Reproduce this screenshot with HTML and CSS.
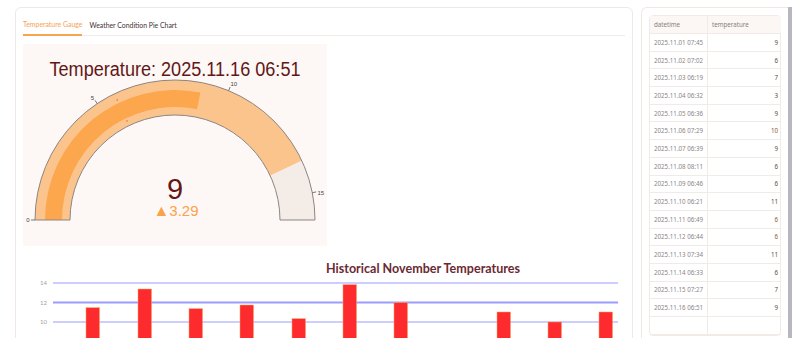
FILE: index.html
```html
<!DOCTYPE html>
<html>
<head>
<meta charset="utf-8">
<link rel="stylesheet" href="styles.css">
</head>
<body>
<div class="page">
  <section class="card main">
    <nav class="tabs">
      <span class="tab active">Temperature Gauge</span>
      <span class="tab">Weather Condition Pie Chart</span>
    </nav>
    <div class="gauge">
      <svg width="304" height="202" viewBox="0 0 304 202">
        <text class="g-title" x="152" y="32" text-anchor="middle" textLength="251" lengthAdjust="spacingAndGlyphs">Temperature: 2025.11.16 06:51</text>
        <path d="M12,176 A140,140 0 0 1 278.88,116.83 L247.16,131.63 A105,105 0 0 0 47,176 Z" fill="#fcc48d"/>
        <path d="M278.88,116.83 A140,140 0 0 1 292,176 L257,176 A105,105 0 0 0 247.16,131.63 Z" fill="#f3ece7"/>
        <path d="M22,176 A130,130 0 0 1 177.36,48.5 L174.05,65.17 A113,113 0 0 0 39,176 Z" fill="#fca64d"/>
        <circle cx="94.2" cy="56" r="0.7" fill="#e8502a"/>
        <circle cx="104" cy="77" r="0.7" fill="#e8502a"/>
        <path d="M12,176 A140,140 0 0 1 292,176 L257,176 A105,105 0 0 0 47,176 Z" fill="none" stroke="#8c8583" stroke-width="1"/>
        <g stroke="#555" stroke-width="0.8">
          <line x1="12" y1="176" x2="8" y2="176"/>
          <line x1="74.2" y1="59.6" x2="72" y2="56.3"/>
          <line x1="205.6" y1="46.7" x2="207.1" y2="43"/>
          <line x1="289.3" y1="148.7" x2="293.2" y2="147.9"/>
        </g>
        <g class="tick">
          <text x="6.5" y="178" text-anchor="end">0</text>
          <text x="71" y="56" text-anchor="end">5</text>
          <text x="207.5" y="42">10</text>
          <text x="294.5" y="150.5">15</text>
        </g>
        <text class="g-value" x="152" y="155" text-anchor="middle">9</text>
        <text class="g-delta" x="153" y="172" text-anchor="middle"><tspan class="tri">▲</tspan>3.29</text>
      </svg>
    </div>
    <div class="chart">
      <svg width="602" height="100" viewBox="0 0 602 100">
        <text class="c-title" x="400" y="22.5" text-anchor="middle" textLength="194" lengthAdjust="spacingAndGlyphs">Historical November Temperatures</text>
        <g class="ylab">
          <text x="24" y="35">14</text>
          <text x="24" y="54.5">12</text>
          <text x="24" y="74">10</text>
        </g>
        <line x1="30" x2="595" y1="33" y2="33" stroke="#9c9cff" stroke-width="1.2"/>
        <line x1="30" x2="595" y1="52.5" y2="52.5" stroke="#9c9cff" stroke-width="2"/>
        <line x1="30" x2="595" y1="72" y2="72" stroke="#9c9cff" stroke-width="1.2"/>
        <g class="bars">
          <rect x="63" y="57.7" width="13.5" height="60"/>
          <rect x="115" y="39" width="13.5" height="80"/>
          <rect x="166" y="58.7" width="13.5" height="60"/>
          <rect x="217" y="55" width="13.5" height="60"/>
          <rect x="269" y="68.7" width="13.5" height="60"/>
          <rect x="320" y="34.7" width="13.5" height="80"/>
          <rect x="371" y="52.7" width="13.5" height="60"/>
          <rect x="474" y="62" width="13.5" height="60"/>
          <rect x="525" y="72" width="13.5" height="60"/>
          <rect x="576" y="62" width="13.5" height="60"/>
        </g>
      </svg>
    </div>
  </section>
  <aside class="side">
    <div class="card table-card">
      <div class="grid">
        <div class="th">datetime</div><div class="th">temperature</div>
        <div class="td">2025.11.01 07:45</div><div class="td num">9</div>
        <div class="td">2025.11.02 07:02</div><div class="td num">6</div>
        <div class="td">2025.11.03 06:19</div><div class="td num">7</div>
        <div class="td">2025.11.04 06:32</div><div class="td num">3</div>
        <div class="td">2025.11.05 06:36</div><div class="td num">9</div>
        <div class="td">2025.11.06 07:29</div><div class="td num hi">10</div>
        <div class="td">2025.11.07 06:39</div><div class="td num">9</div>
        <div class="td">2025.11.08 08:11</div><div class="td num">6</div>
        <div class="td">2025.11.09 06:46</div><div class="td num">6</div>
        <div class="td">2025.11.10 06:21</div><div class="td num">11</div>
        <div class="td">2025.11.11 06:49</div><div class="td num hi">6</div>
        <div class="td">2025.11.12 06:44</div><div class="td num hi">6</div>
        <div class="td">2025.11.13 07:34</div><div class="td num">11</div>
        <div class="td">2025.11.14 06:33</div><div class="td num">6</div>
        <div class="td">2025.11.15 07:27</div><div class="td num">7</div>
        <div class="td">2025.11.16 06:51</div><div class="td num">9</div>
        <div class="td"></div><div class="td num"></div>
      </div>
    </div>
    <div class="scrollbar"></div>
  </aside>
</div>
</body>
</html>
```
FILE: styles.css
```css
html, body {
  margin: 0;
  padding: 0;
  background: #ffffff;
  overflow: hidden;
}
body {
  width: 800px;
  height: 338px;
  font-family: "Lato", "Noto Sans", sans-serif;
}
.page {
  display: flex;
  gap: 8px;
  padding: 7px 0 0 15px;
  height: 331px;
}
.card {
  border: 1px solid #efe9e6;
  border-radius: 6px;
  background: #fff;
  box-sizing: border-box;
}
.main {
  width: 618px;
  height: 360px;
  padding: 0 7px;
}
.tabs {
  display: flex;
  gap: 7px;
  height: 28px;
  border-bottom: 1px solid #f1ece9;
  box-sizing: border-box;
  align-items: stretch;
}
.tab {
  font-size: 6.9px;
  color: #3f3232;
  display: flex;
  align-items: center;
  padding-top: 6px;
  box-sizing: border-box;
}
.tab.active {
  color: #f7a156;
  border-bottom: 2px solid #fba34f;
  margin-bottom: -1px;
}
.gauge {
  margin-top: 8px;
  width: 304px;
  height: 202px;
  background: #fdf8f5;
}
.gauge svg, .chart svg {
  display: block;
}
.g-title {
  font-family: "Liberation Sans", Arial, sans-serif;
  font-size: 20px;
  fill: #621717;
}
.g-value {
  font-family: "Liberation Sans", Arial, sans-serif;
  font-size: 29px;
  fill: #621717;
}
.g-delta {
  font-family: "Liberation Sans", "DejaVu Sans", sans-serif;
  font-size: 15px;
  fill: #fba14a;
}
.g-delta .tri {
  font-size: 16px;
}
.tick text {
  font-family: "Liberation Sans", Arial, sans-serif;
  font-size: 6px;
  fill: #444;
}
.chart {
  margin-top: 4px;
  width: 602px;
  height: 100px;
}
.c-title {
  font-family: "Lato", "Noto Sans", sans-serif;
  font-weight: 700;
  font-size: 13px;
  fill: #6b2a33;
}
.ylab text {
  font-family: "Lato", sans-serif;
  font-size: 6px;
  fill: #a49ca6;
  text-anchor: end;
}
.bars rect {
  fill: #fd2b2d;
  stroke: #f7a060;
  stroke-width: 0.5;
}
.side {
  display: flex;
  height: 340px;
}
.table-card {
  width: 147px;
  height: 340px;
  padding: 7px 7px 0 7px;
  border-right: none;
  border-radius: 6px 0 0 6px;
}
.grid {
  display: grid;
  grid-template-columns: 58px 73px;
  grid-template-rows: 18px;
  grid-auto-rows: 17.7px;
  border: 1px solid #f1ebe8;
  border-radius: 4px;
  font-family: "Noto Sans", "Lato", sans-serif;
  font-size: 6.2px;
  color: #8a8585;
}
.th {
  background: #fcf6f4;
  color: #8a8080;
  display: flex;
  align-items: center;
  padding-left: 4px;
  border-bottom: 1px solid #f1ebe8;
  border-right: 1px solid #f1ebe8;
}
.td {
  display: flex;
  align-items: center;
  padding-left: 4px;
  border-bottom: 1px solid #f1ebe8;
  border-right: 1px solid #f1ebe8;
}
.th:nth-child(2n), .td:nth-child(2n) {
  border-right: none;
}
.num {
  justify-content: flex-end;
  padding-right: 3px;
  color: #5a4a4a;
}
.num.hi {
  color: #8a5a2a;
}
.scrollbar {
  width: 4px;
  background: #b8b6bf;
  height: 340px;
}
```
